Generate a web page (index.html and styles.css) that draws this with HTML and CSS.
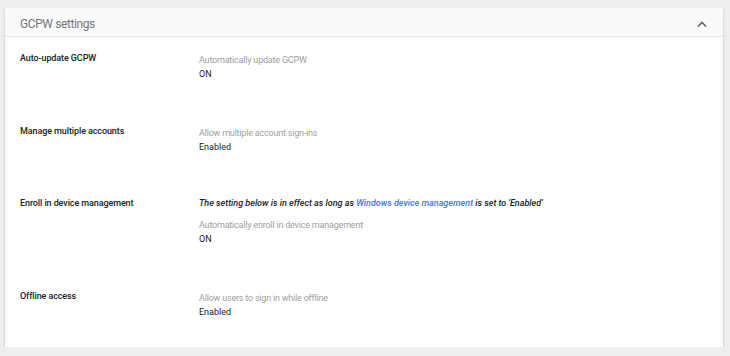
FILE: index.html
```html
<!DOCTYPE html>
<html lang="en">
<head>
    <meta charset="UTF-8">
    <title>GCPW settings</title>
    <link rel="stylesheet" href="styles.css">
</head>
<body>
    <section class="card">
        <header class="card-header">
            <h2>GCPW settings</h2>
            <svg class="chevron" width="10" height="6" viewBox="0 0 10 6">
                <path d="M1 5.5 L5 1.5 L9 5.5" fill="none" stroke="#616161" stroke-width="1.6"/>
            </svg>
        </header>

        <div class="setting">
            <div class="setting-name">Auto-update GCPW</div>
            <div class="setting-value">
                <div class="desc">Automatically update GCPW</div>
                <div class="value">ON</div>
            </div>
        </div>

        <div class="setting">
            <div class="setting-name">Manage multiple accounts</div>
            <div class="setting-value">
                <div class="desc">Allow multiple account sign-ins</div>
                <div class="value">Enabled</div>
            </div>
        </div>

        <div class="setting">
            <div class="setting-name">Enroll in device management</div>
            <div class="setting-value">
                <div class="notice">The setting below is in effect as long as <a href="#">Windows device management</a> is set to 'Enabled'</div>
                <div class="desc">Automatically enroll in device management</div>
                <div class="value">ON</div>
            </div>
        </div>

        <div class="setting">
            <div class="setting-name">Offline access</div>
            <div class="setting-value">
                <div class="desc">Allow users to sign in while offline</div>
                <div class="value">Enabled</div>
            </div>
        </div>
    </section>
</body>
</html>
```

FILE: styles.css
```css
body {
    margin: 0;
    padding: 8px 7px 0 5px;
    background-color: #eeeeee;
    font-family: Roboto, "Liberation Sans", sans-serif;
    color: #212121;
}
.card {
    background: #fff;
    box-shadow: 0 1px 2px rgba(0, 0, 0, 0.25);
}
.card-header {
    display: flex;
    align-items: center;
    justify-content: space-between;
    height: 24px;
    padding: 4px 15px 0 15px;
    background: #fafafa;
    border-bottom: 1px solid #e4e4e4;
}
.card-header h2 {
    margin: 0;
    font-size: 12px;
    font-weight: 400;
    letter-spacing: -0.4px;
    color: #757575;
}
.chevron {
    display: block;
    margin-right: 1px;
}
.setting {
    display: flex;
    padding: 14px 0 28.5px 15px;
    font-size: 9px;
    line-height: 14px;
}
.setting-name {
    width: 179px;
    font-weight: 500;
    letter-spacing: -0.1px;
}
.setting-value {
    padding-top: 2px;
}
.notice {
    margin-top: -2px;
    margin-bottom: 8px;
    font-style: italic;
    font-weight: 500;
}
.notice a {
    color: #3b78e7;
    text-decoration: none;
}
.desc {
    color: #9e9e9e;
    letter-spacing: -0.2px;
}
.value {
    color: #212121;
}
```
